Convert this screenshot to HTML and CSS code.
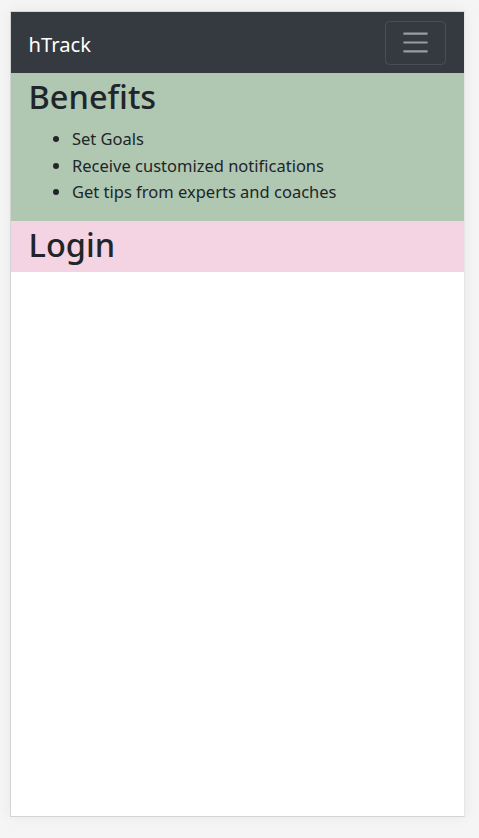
FILE: index.html
```html
<!DOCTYPE html>
<html lang="en">
<head>
<meta charset="utf-8">
<title>hTrack</title>
<link rel="stylesheet" href="styles.css">
</head>
<body>
<div class="device">
  <nav class="navbar">
    <a class="brand" href="#">hTrack</a>
    <button class="toggler" type="button" aria-label="Toggle navigation">
      <svg class="toggler-icon" viewBox="0 0 30 30" width="33" height="33"><path d="M4 7h22M4 15h22M4 23h22" stroke="rgba(255,255,255,0.5)" stroke-width="2" stroke-linecap="butt" fill="none"/></svg>
    </button>
  </nav>
  <section class="benefits">
    <h1 class="title">Benefits</h1>
    <ul class="list">
      <li>Set Goals</li>
      <li>Receive customized notifications</li>
      <li>Get tips from experts and coaches</li>
    </ul>
  </section>
  <section class="login">
    <h1 class="title">Login</h1>
  </section>
</div>
</body>
</html>
```
FILE: styles.css
```css
html, body {
  margin: 0;
  padding: 0;
}
body {
  background: #f5f5f5;
  font-family: "Noto Sans", "Open Sans", sans-serif;
  color: #212529;
  font-size: 16.5px;
  line-height: 26.4px;
  padding: 11px 14px 21px 10px;
}
.device {
  width: 453px;
  height: 804px;
  border: 1px solid #d4d4d4;
  border-right-color: #e6e6e6;
  background: #fff;
  box-shadow: 0 0 14px rgba(0,0,0,0.06);
  overflow: hidden;
}
.navbar {
  background: #343a40;
  display: flex;
  align-items: center;
  justify-content: space-between;
  padding: 8.8px 17.6px;
}
.brand {
  color: #fff;
  text-decoration: none;
  font-size: 20.2px;
  line-height: 29px;
  padding-top: 4px;
}
.toggler {
  display: flex;
  padding: 4.4px 13.2px;
  background: transparent;
  border: 1px solid rgba(255,255,255,0.1);
  border-radius: 4.4px;
  margin: 0;
}
.toggler-icon {
  display: block;
}
.title {
  margin: 0 0 8.8px;
  font-size: 32.5px;
  font-weight: 500;
  line-height: 36.24px;
  padding: 6px 0 0 17.6px;
}
.benefits {
  display: flow-root;
  background: #b0c8b2;
}
.list {
  margin: 0 0 15.6px;
  padding: 2px 0 0 61px;
}
.login {
  display: flow-root;
  background: #f4d3e3;
}
```
